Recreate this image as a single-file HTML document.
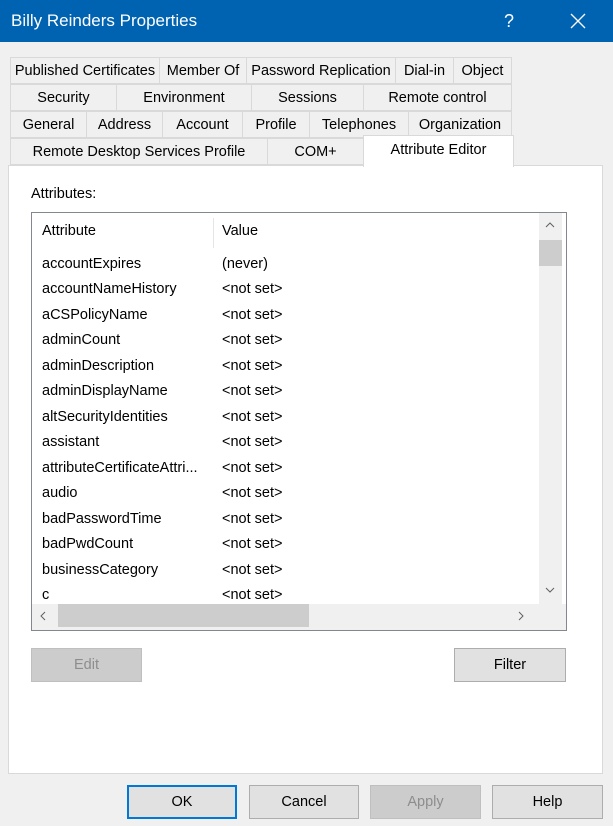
<!DOCTYPE html><html><head><style>
body{margin:0;width:613px;height:826px;background:#f0f0f0;font-family:"Liberation Sans",sans-serif;font-size:14.5px;color:#000;position:relative;overflow:hidden}
div{position:absolute;box-sizing:border-box}
.t{height:27px;border:1px solid #d9d9d9;background:#f0f0f0;text-align:center;line-height:26px;white-space:nowrap}
.b{height:34px;border:1px solid #adadad;background:#e1e1e1;text-align:center;line-height:33px}
.r{left:42px;white-space:nowrap}
.v{left:222px;white-space:nowrap}
</style></head><body>
<div style="left:0;top:0;width:613px;height:42px;background:#0063b1;color:#fff;font-size:17px;line-height:42px;padding-left:11px">Billy Reinders Properties
<span style="position:absolute;left:504px;top:0;font-size:18px">?</span>
<svg style="position:absolute;left:570px;top:13px" width="16" height="16"><path d="M1 1L15 15M15 1L1 15" stroke="#fff" stroke-width="1.3"/></svg></div>
<div style="left:8px;top:165px;width:595px;height:609px;background:#fff;border:1px solid #d9d9d9"></div>
<div class="t" style="left:10px;top:57px;width:150px">Published Certificates</div>
<div class="t" style="left:159px;top:57px;width:88px">Member Of</div>
<div class="t" style="left:246px;top:57px;width:150px">Password Replication</div>
<div class="t" style="left:395px;top:57px;width:59px">Dial-in</div>
<div class="t" style="left:453px;top:57px;width:59px">Object</div>
<div class="t" style="left:10px;top:84px;width:107px">Security</div>
<div class="t" style="left:116px;top:84px;width:136px">Environment</div>
<div class="t" style="left:251px;top:84px;width:113px">Sessions</div>
<div class="t" style="left:363px;top:84px;width:149px">Remote control</div>
<div class="t" style="left:10px;top:111px;width:77px">General</div>
<div class="t" style="left:86px;top:111px;width:77px">Address</div>
<div class="t" style="left:162px;top:111px;width:81px">Account</div>
<div class="t" style="left:242px;top:111px;width:68px">Profile</div>
<div class="t" style="left:309px;top:111px;width:100px">Telephones</div>
<div class="t" style="left:408px;top:111px;width:104px">Organization</div>
<div class="t" style="left:10px;top:138px;width:258px">Remote Desktop Services Profile</div>
<div class="t" style="left:267px;top:138px;width:97px">COM+</div>
<div class="t" style="left:363px;top:135px;width:151px;height:32px;background:#fff;border-bottom:none;line-height:28px">Attribute Editor</div>
<div style="left:31px;top:186px">Attributes:</div>
<div style="left:31px;top:212px;width:536px;height:419px;border:1px solid #828790;background:#fff"></div>
<div style="left:42px;top:223px">Attribute</div>
<div style="left:213px;top:218px;width:1px;height:30px;background:#e5e5e5"></div>
<div style="left:222px;top:223px">Value</div>
<div style="left:539px;top:213px;width:23px;height:391px;background:#f0f0f0"></div>
<div style="left:539px;top:240px;width:23px;height:26px;background:#cdcdcd"></div>
<svg style="position:absolute;left:545px;top:222px" width="10" height="6"><path d="M1 5L5 1L9 5" fill="none" stroke="#606060"/></svg>
<svg style="position:absolute;left:545px;top:587px" width="10" height="6"><path d="M1 1L5 5L9 1" fill="none" stroke="#606060"/></svg>
<div style="left:32px;top:604px;width:534px;height:26px;background:#f0f0f0"></div>
<div style="left:58px;top:604px;width:251px;height:23px;background:#cdcdcd"></div>
<svg style="position:absolute;left:40px;top:611px" width="6" height="10"><path d="M5 1L1 5L5 9" fill="none" stroke="#606060"/></svg>
<svg style="position:absolute;left:518px;top:611px" width="6" height="10"><path d="M1 1L5 5L1 9" fill="none" stroke="#606060"/></svg>
<div class="r" style="top:256px">accountExpires</div><div class="v" style="top:256px">(never)</div>
<div class="r" style="top:281px">accountNameHistory</div><div class="v" style="top:281px">&lt;not set&gt;</div>
<div class="r" style="top:307px">aCSPolicyName</div><div class="v" style="top:307px">&lt;not set&gt;</div>
<div class="r" style="top:332px">adminCount</div><div class="v" style="top:332px">&lt;not set&gt;</div>
<div class="r" style="top:358px">adminDescription</div><div class="v" style="top:358px">&lt;not set&gt;</div>
<div class="r" style="top:383px">adminDisplayName</div><div class="v" style="top:383px">&lt;not set&gt;</div>
<div class="r" style="top:409px">altSecurityIdentities</div><div class="v" style="top:409px">&lt;not set&gt;</div>
<div class="r" style="top:434px">assistant</div><div class="v" style="top:434px">&lt;not set&gt;</div>
<div class="r" style="top:460px">attributeCertificateAttri...</div><div class="v" style="top:460px">&lt;not set&gt;</div>
<div class="r" style="top:485px">audio</div><div class="v" style="top:485px">&lt;not set&gt;</div>
<div class="r" style="top:511px">badPasswordTime</div><div class="v" style="top:511px">&lt;not set&gt;</div>
<div class="r" style="top:536px">badPwdCount</div><div class="v" style="top:536px">&lt;not set&gt;</div>
<div class="r" style="top:562px">businessCategory</div><div class="v" style="top:562px">&lt;not set&gt;</div>
<div style="left:32px;top:586px;width:507px;height:18px;overflow:hidden;background:#fff"><span style="position:absolute;left:10px;top:1px">c</span><span style="position:absolute;left:190px;top:1px">&lt;not set&gt;</span></div>
<div class="b" style="left:31px;top:648px;width:111px;background:#cccccc;border-color:#bfbfbf;color:#8d8d8d">Edit</div>
<div class="b" style="left:454px;top:648px;width:112px">Filter</div>
<div class="b" style="left:127px;top:785px;width:110px;border:2px solid #0078d7;line-height:31px">OK</div>
<div class="b" style="left:249px;top:785px;width:110px">Cancel</div>
<div class="b" style="left:370px;top:785px;width:111px;background:#cccccc;border-color:#bfbfbf;color:#8d8d8d">Apply</div>
<div class="b" style="left:492px;top:785px;width:111px">Help</div>
</body></html>
